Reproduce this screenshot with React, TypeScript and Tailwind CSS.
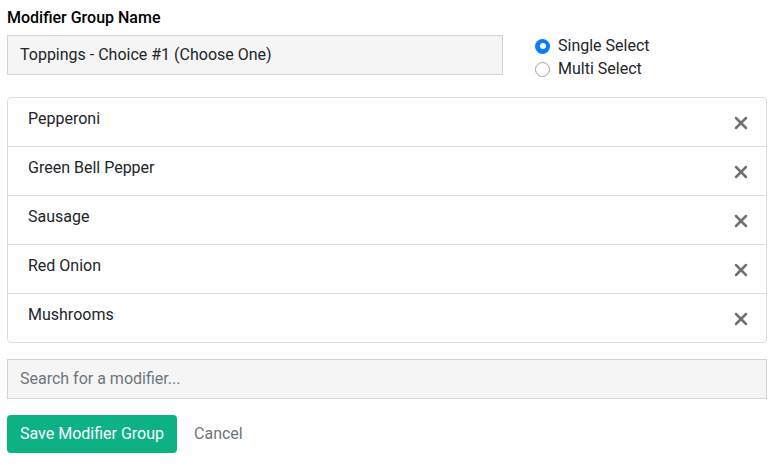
import { X } from 'lucide-react';

const toppings = ['Pepperoni', 'Green Bell Pepper', 'Sausage', 'Red Onion', 'Mushrooms'];

export default function App() {
  return (
    <div className="w-[784px] h-[468px] bg-white pl-[7px] pr-[17px] pt-[8px] text-[#212529]" style={{ fontFamily: 'Roboto, "Noto Sans", sans-serif' }}>
      {/* Name + select type */}
      <div className="flex">
        <div className="w-[496px]">
          <label className="block text-[16px] font-medium text-black leading-[20px]">Modifier Group Name</label>
          <div className="mt-[7px] h-[40px] bg-[#f5f5f5] border border-[#d4d4d4] flex items-center px-[12px] text-[16px] text-[#212529]">
            Toppings - Choice #1 (Choose One)
          </div>
        </div>
        <div className="ml-[32px] pt-[28px] flex flex-col gap-[3px] text-[16px] leading-[20px]">
          <label className="flex items-center gap-[8px]">
            <span className="w-[15px] h-[15px] rounded-full bg-[#0a7cff] flex items-center justify-center">
              <span className="w-[6px] h-[6px] rounded-full bg-white" />
            </span>
            Single Select
          </label>
          <label className="flex items-center gap-[8px]">
            <span className="w-[15px] h-[15px] rounded-full border border-[#a0a0a8] bg-white" />
            Multi Select
          </label>
        </div>
      </div>

      {/* Toppings list */}
      <div className="mt-[18px] border border-[#dcdcdc] rounded-[4px]">
        {toppings.map((t, i) => (
          <div
            key={t}
            className={`flex justify-between pl-[20px] pr-[15px] ${i > 0 ? 'h-[49px] border-t border-[#dcdcdc]' : 'h-[48px]'}`}
          >
            <span className="text-[16px] leading-[20px] pt-[11px]">{t}</span>
            <X size={20} strokeWidth={3} className="text-[#707070] mt-[15px]" />
          </div>
        ))}
      </div>

      {/* Search */}
      <div className="mt-[16px] h-[40px] bg-[#f5f5f5] border border-[#d4d4d4] flex items-center px-[12px] text-[16px] text-[#6c757d]">
        Search for a modifier...
      </div>

      {/* Actions */}
      <div className="mt-[16px] flex items-center">
        <button className="h-[38px] px-[13px] bg-[#0db284] text-white text-[16px] rounded-[4px]">
          Save Modifier Group
        </button>
        <button className="ml-[17px] text-[16px] text-[#6c757d]">Cancel</button>
      </div>
    </div>
  );
}
